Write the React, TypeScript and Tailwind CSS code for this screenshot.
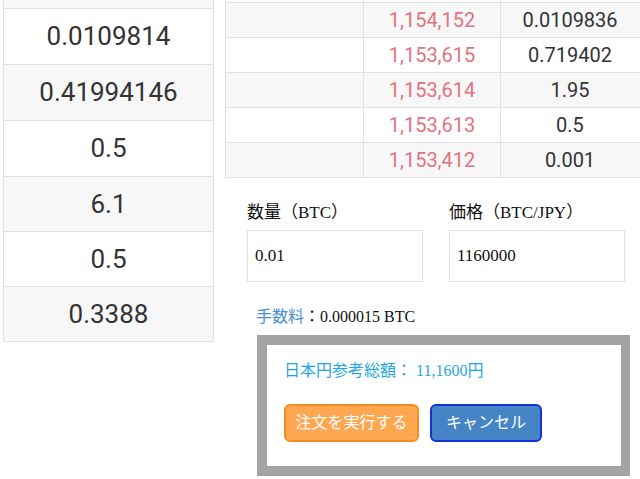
const sans = "font-['Roboto','Noto_Sans_CJK_JP',sans-serif]"
const serif = "font-['Liberation_Serif','Noto_Sans_CJK_JP',serif]"

const leftRows = [
  { value: "0.0109814", shaded: false, h: "h-[56px]" },
  { value: "0.41994146", shaded: true, h: "h-[56px]" },
  { value: "0.5", shaded: false, h: "h-[56px]" },
  { value: "6.1", shaded: true, h: "h-[55px]" },
  { value: "0.5", shaded: false, h: "h-[55px]" },
  { value: "0.3388", shaded: true, h: "h-[55px]" },
]

const askRows = [
  { price: "1,154,152", amount: "0.0109836" },
  { price: "1,153,615", amount: "0.719402" },
  { price: "1,153,614", amount: "1.95" },
  { price: "1,153,613", amount: "0.5" },
  { price: "1,153,412", amount: "0.001" },
]

/**
 * AmountTable
 * Left-hand column of trade amounts, cut off at the top
 */
function AmountTable() {
  return (
    <div className="ml-[3px] w-[211px] shrink-0 self-start border-x border-[#dde2ea]">
      {/* partially visible row above the crop */}
      <div className="h-[9px] border-b border-[#dde2ea] bg-[#f7f7f7]" />
      {leftRows.map((row, i) => (
        <div
          key={i}
          className={`flex ${row.h} items-center justify-center border-b border-[#dde2ea] text-[26px] text-[#333] ${
            row.shaded ? "bg-[#f7f7f7]" : "bg-white"
          }`}
        >
          {row.value}
        </div>
      ))}
    </div>
  )
}

/**
 * AskTable
 * Sell side of the order book
 */
function AskTable() {
  return (
    <div className="w-[420px] border-l border-[#dde2ea]">
      <div className="grid h-[3px] grid-cols-[138px_137px_1fr] border-b border-[#dde2ea]">
        <div className="border-r border-[#dde2ea]" />
        <div className="border-r border-[#dde2ea]" />
        <div />
      </div>
      {askRows.map((row, i) => (
        <div
          key={row.price}
          className={`grid h-[35px] grid-cols-[138px_137px_1fr] border-b border-[#dde2ea] text-[20px] ${
            i % 2 === 0 ? "bg-[#f7f7f7]" : "bg-white"
          }`}
        >
          <div className="border-r border-[#dde2ea]" />
          <div className="flex items-center justify-center border-r border-[#dde2ea] text-[#e2737f]">
            {row.price}
          </div>
          <div className="flex items-center justify-center pr-[6px] text-[#333]">
            {row.amount}
          </div>
        </div>
      ))}
    </div>
  )
}

/**
 * OrderForm
 * Amount / price inputs and the confirmation box
 */
function OrderForm() {
  return (
    <div className={`pl-[22px] ${serif}`}>
      <div className="mt-[24px] flex gap-[26px]">
        <label className="flex w-[176px] flex-col">
          <span className="text-[17px] leading-[22px] text-[#111]">数量（BTC）</span>
          <div className="mt-[6px] flex h-[52px] items-center border border-[#e2e2e2] bg-white px-[7px] text-[17px] text-[#111]">
            0.01
          </div>
        </label>
        <label className="flex w-[176px] flex-col">
          <span className="text-[17px] leading-[22px] text-[#111]">価格（BTC/JPY）</span>
          <div className="mt-[6px] flex h-[52px] items-center border border-[#e2e2e2] bg-white px-[7px] text-[17px] text-[#111]">
            1160000
          </div>
        </label>
      </div>

      <p className="mt-[24px] pl-[9px] text-[16px] leading-[21px] text-[#111]">
        <span className="text-[#4a8fd0]">手数料</span>：0.000015 BTC
      </p>

      {/* Confirmation box */}
      <div className="mt-[8px] ml-[10px] h-[141px] w-[373px] border-[10px] border-r-[9px] border-[#a3a3a3] bg-white px-[17px]">
        <p className="mt-[15px] text-[16px] leading-[21px] text-[#1fa6e6]">
          日本円参考総額： 11,1600円
        </p>
        <div className={`mt-[23px] flex gap-[11px] ${sans}`}>
          <button className="h-[38px] w-[135px] rounded-[6px] border-2 border-[#f28d22] bg-[#fea750] text-[16px] text-white">
            注文を実行する
          </button>
          <button className="h-[38px] w-[112px] rounded-[6px] border-2 border-[#1930d8] bg-[#4585c6] text-[16px] text-white">
            キャンセル
          </button>
        </div>
      </div>
    </div>
  )
}

export default function App() {
  return (
    <div className={`flex h-[479px] w-[640px] overflow-hidden bg-white ${sans}`}>
      <AmountTable />
      <div className="ml-[11px] flex flex-col">
        <AskTable />
        <OrderForm />
      </div>
    </div>
  )
}
